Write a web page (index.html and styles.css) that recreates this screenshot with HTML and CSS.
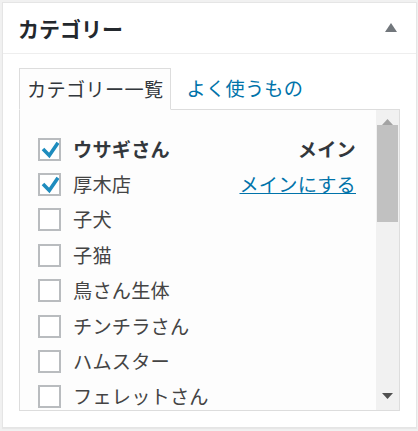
FILE: index.html
```html
<!DOCTYPE html>
<html lang="ja">
<head>
<meta charset="utf-8">
<link rel="stylesheet" href="styles.css">
</head>
<body>
<div class="postbox">
  <div class="hndle">
    <h2 class="title">カテゴリー</h2>
    <svg class="toggle" width="12" height="9" viewBox="0 0 12 9"><polygon points="6,0 12,9 0,9" fill="#72777c"/></svg>
  </div>
  <div class="inside">
    <ul class="tabs">
      <li class="tab active">カテゴリー一覧</li>
      <li class="tab"><a href="#">よく使うもの</a></li>
    </ul>
    <div class="panel">
      <ul class="list">
        <li class="row">
          <span class="cb"><svg viewBox="0 0 19 19" width="19" height="19"><polyline points="3,9 9.3,15.5 18,2.7" fill="none" stroke="#1e8cbe" stroke-width="3.6"/></svg></span>
          <span class="name bold">ウサギさん</span>
          <span class="main">メイン</span>
        </li>
        <li class="row">
          <span class="cb"><svg viewBox="0 0 19 19" width="19" height="19"><polyline points="3,9 9.3,15.5 18,2.7" fill="none" stroke="#1e8cbe" stroke-width="3.6"/></svg></span>
          <span class="name">厚木店</span>
          <a class="make" href="#">メインにする</a>
        </li>
        <li class="row"><span class="cb"></span><span class="name">子犬</span></li>
        <li class="row"><span class="cb"></span><span class="name">子猫</span></li>
        <li class="row"><span class="cb"></span><span class="name">鳥さん生体</span></li>
        <li class="row"><span class="cb"></span><span class="name">チンチラさん</span></li>
        <li class="row"><span class="cb"></span><span class="name">ハムスター</span></li>
        <li class="row"><span class="cb"></span><span class="name">フェレットさん</span></li>
      </ul>
      <div class="scrollbar">
        <div class="btn up"><svg width="11" height="6" viewBox="0 0 11 6"><polygon points="5.5,0 11,6 0,6" fill="#a3a3a3"/></svg></div>
        <div class="thumb"></div>
        <div class="track"></div>
        <div class="btn down"><svg width="11" height="6" viewBox="0 0 11 6"><polygon points="0,0 11,0 5.5,6" fill="#505050"/></svg></div>
      </div>
    </div>
  </div>
</div>
</body>
</html>
```

FILE: styles.css
```css
html, body {
  margin: 0;
  padding: 0;
}
body {
  background: #f1f1f1;
  padding: 2px 1px 3px 2px;
  font-family: "Noto Sans CJK JP", "Noto Sans", sans-serif;
  width: 418px;
  height: 431px;
  box-sizing: border-box;
  overflow: hidden;
}
.postbox {
  background: #fff;
  border: 1px solid #e5e5e5;
  box-shadow: 0 1px 1px rgba(0,0,0,0.04);
}
.hndle {
  height: 50px;
  border-bottom: 1px solid #eee;
  display: flex;
  align-items: center;
  justify-content: space-between;
  padding: 0 19px 0 15px;
}
.title {
  margin: 0;
  font-size: 21px;
  font-weight: 700;
  color: #23282d;
  line-height: 1;
}
.toggle {
  display: block;
  margin-top: -1px;
}
.inside {
  padding: 14px 16px 16px 16px;
}
.tabs {
  list-style: none;
  margin: 0 0 -1px 0;
  padding: 0;
  display: flex;
  position: relative;
  z-index: 1;
}
.tab {
  font-size: 19.2px;
  letter-spacing: 0.3px;
  line-height: 40px;
  height: 41px;
  padding: 0 7px;
  color: #0073aa;
}
.tab.active {
  color: #32373c;
  background: #fdfdfd;
  border: 1px solid #ddd;
  border-bottom: 1px solid #fdfdfd;
  height: 40px;
}
.tab a {
  color: #0073aa;
  text-decoration: none;
  padding-left: 8px;
}
.panel {
  border: 1px solid #ddd;
  background: #fdfdfd;
  height: 300px;
  display: flex;
  overflow: hidden;
}
.list {
  list-style: none;
  margin: 0;
  padding: 21.5px 20px 0 18px;
  flex: 1;
  overflow: hidden;
}
.row {
  height: 35.4px;
  display: flex;
  align-items: center;
  font-size: 19.2px;
  letter-spacing: 0.2px;
  color: #444;
}
.cb {
  width: 19px;
  height: 19px;
  border: 2px solid #b9bcbf;
  background: #fff;
  flex: none;
  margin-right: 12px;
}
.cb svg {
  display: block;
}
.name {
  flex: 1;
  line-height: 1;
}
.bold {
  font-weight: 700;
  color: #32373c;
}
.main {
  font-weight: 700;
  color: #32373c;
  line-height: 1;
}
.make {
  color: #0073aa;
  text-decoration: underline;
  line-height: 1;
}
.scrollbar {
  width: 23px;
  flex: none;
  background: #f1f1f1;
  display: flex;
  flex-direction: column;
}
.btn {
  height: 15px;
  display: flex;
  justify-content: center;
  align-items: flex-end;
}
.btn.down {
  height: 17px;
  align-items: flex-start;
}
.thumb {
  height: 97px;
  margin: 0 1px;
  background: #c1c1c1;
}
.track {
  flex: 1;
}
```
